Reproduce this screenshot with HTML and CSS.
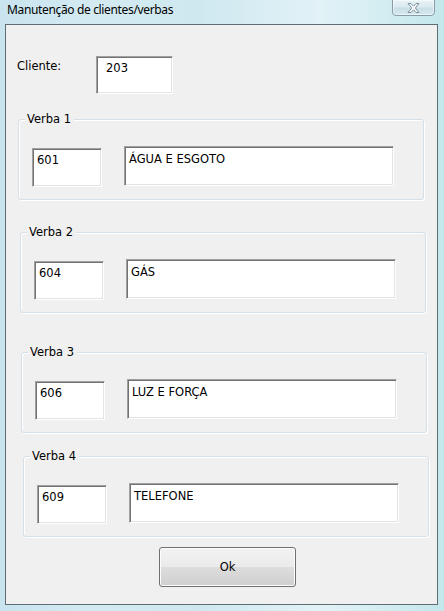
FILE: index.html
```html
<!DOCTYPE html>
<html lang="pt">
<head>
<meta charset="utf-8">
<title>Manutenção de clientes/verbas</title>
<link rel="stylesheet" href="styles.css">
</head>
<body>
<div class="window">
  <div class="titlebar">
    <span class="title">Manutenção de clientes/verbas</span>
    <button class="close" aria-label="Fechar">
      <svg width="13" height="10" viewBox="0 0 13 10"><polygon points="1,0.5 4,0.5 6.5,3.2 9,0.5 12,0.5 8.3,5 12,9.5 9,9.5 6.5,6.8 4,9.5 1,9.5 4.7,5" fill="#f6fafc" stroke="#7d929c" stroke-width="1" stroke-linejoin="round"/></svg>
    </button>
  </div>
  <div class="client">
    <div class="cliente-row">
      <span class="cliente-label">Cliente:</span>
      <div class="field field-cliente">203</div>
    </div>

    <div class="group g1">
      <div class="caption">Verba 1</div>
      <div class="group-row">
        <div class="field code">601</div>
        <div class="field desc">ÁGUA E ESGOTO</div>
      </div>
    </div>

    <div class="group g2">
      <div class="caption">Verba 2</div>
      <div class="group-row">
        <div class="field code">604</div>
        <div class="field desc">GÁS</div>
      </div>
    </div>

    <div class="group g3">
      <div class="caption">Verba 3</div>
      <div class="group-row">
        <div class="field code">606</div>
        <div class="field desc">LUZ E FORÇA</div>
      </div>
    </div>

    <div class="group g4">
      <div class="caption">Verba 4</div>
      <div class="group-row">
        <div class="field code">609</div>
        <div class="field desc">TELEFONE</div>
      </div>
    </div>

    <div class="actions">
      <button class="ok">Ok</button>
    </div>
  </div>
</div>
</body>
</html>
```

FILE: styles.css
```css
* { box-sizing: border-box; }

html, body {
  margin: 0;
  padding: 0;
}

body {
  width: 444px;
  height: 611px;
  overflow: hidden;
  font-family: "DejaVu Sans", "Liberation Sans", sans-serif;
  font-size: 11.5px;
  color: #000;
}

.window {
  width: 444px;
  height: 611px;
  display: flex;
  flex-direction: column;
  background:
    linear-gradient(90deg, #c9e4ee 0%, #d3eaf2 20%, #cfe8f0 45%, #e2f2f7 72%, #d8eff3 82%, #c4e7ec 100%);
}

.titlebar {
  height: 24px;
  flex: none;
  display: flex;
  justify-content: space-between;
  align-items: flex-start;
}

.title {
  font-family: "Noto Sans", "Open Sans", sans-serif;
  font-size: 12px;
  letter-spacing: -0.35px;
  line-height: 16px;
  padding: 2px 0 0 7px;
  color: #000;
}

.close {
  width: 43px;
  height: 17px;
  margin: -1px 9px 0 0;
  padding: 0;
  border: 1px solid #869ca6;
  border-radius: 0 0 4px 4px;
  background: linear-gradient(180deg, #e8f2f6 0%, #d9eaf0 48%, #c8dee6 52%, #d6e9ef 100%);
  box-shadow: inset 0 0 0 1px rgba(255, 255, 255, 0.55);
  display: flex;
  align-items: center;
  justify-content: center;
}

.close svg { display: block; margin-top: 1px; }

.client {
  margin: 0 6px 0 5px;
  height: 581px;
  flex: none;
  border: 1px solid #5e6c74;
  background: #f0f0f0;
  display: flex;
  flex-direction: column;
}

/* sunken text boxes */
.field {
  background: #fff;
  border-top: 1px solid #a0a0a0;
  border-left: 1px solid #a0a0a0;
  border-right: 1px solid #fff;
  border-bottom: 1px solid #fff;
  box-shadow: inset 1px 1px 0 #737373, inset -1px -1px 0 #e3e3e3;
  line-height: 13px;
  white-space: nowrap;
  flex: none;
}

.cliente-row {
  display: flex;
  align-items: flex-start;
  margin-top: 31px;
  padding-left: 11px;
}

.cliente-label {
  width: 79px;
  line-height: 13px;
  padding-top: 4px;
}

.field-cliente {
  width: 77px;
  height: 38px;
  padding: 5px 0 0 9px;
}

.group {
  width: 406px;
  height: 81px;
  border: 1px solid #d5dfe5;
  border-radius: 3px;
  box-shadow: inset 1px 1px 0 #fff, 1px 1px 0 #fff;
  padding: 0 0 0 13px;
}

.g1 { margin: 25px 0 0 12px; }
.g2 { margin: 32px 0 0 14px; }
.g3 { margin: 39px 0 0 15px; }
.g4 { margin: 23px 0 0 17px; }

.caption {
  width: fit-content;
  margin: -8px 0 0 -7px;
  padding: 1px 3px 0 2px;
  line-height: 13px;
  background: #f0f0f0;
}

.group-row {
  display: flex;
  align-items: flex-start;
  gap: 22px;
  margin-top: 20px;
}

.code {
  width: 70px;
  height: 39px;
  margin-top: 2px;
  padding: 5px 0 0 4px;
}

.desc {
  width: 270px;
  height: 40px;
  padding: 6px 0 0 4px;
}

.actions {
  display: flex;
  padding-left: 153px;
  margin-top: 10px;
}

.ok {
  width: 137px;
  height: 40px;
  font-family: "DejaVu Sans", sans-serif;
  font-size: 11.5px;
  color: #000;
  border: 1px solid #707070;
  border-radius: 3px;
  background: linear-gradient(180deg, #f2f2f2 0%, #ebebeb 49%, #dddddd 50%, #cfcfcf 100%);
  box-shadow: inset 0 0 0 1px #fcfcfc;
  padding: 0;
}
```
